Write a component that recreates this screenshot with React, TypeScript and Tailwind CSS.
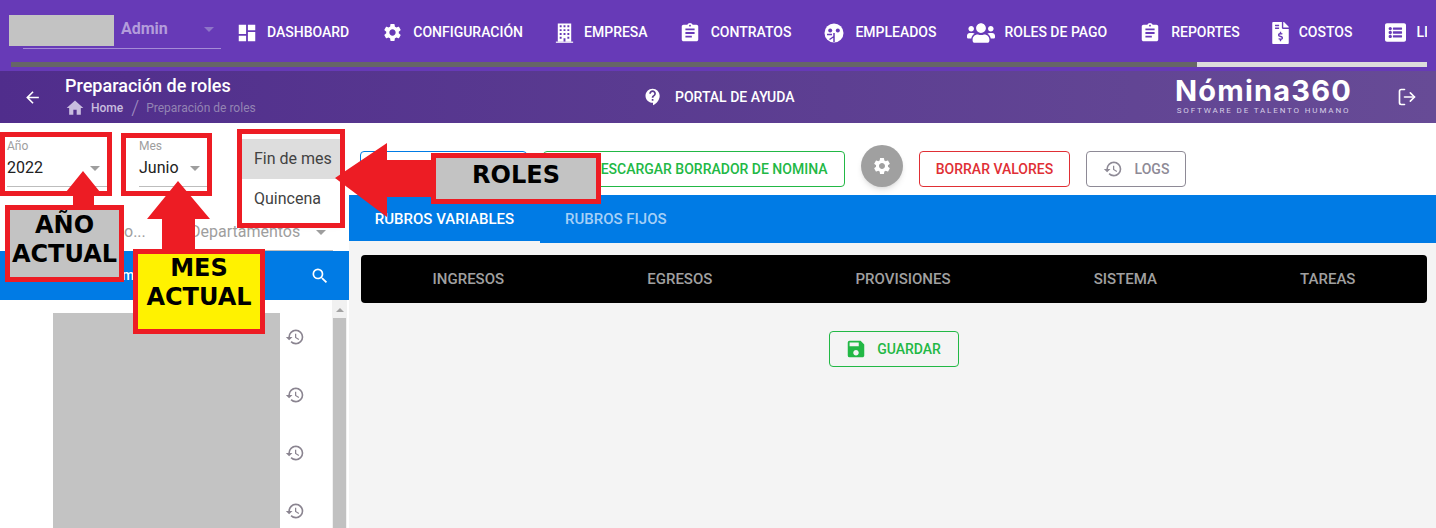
import type { ReactNode } from 'react'
import { LogOut } from 'lucide-react'
import { FaFileInvoiceDollar, FaListAlt, FaUsers } from 'react-icons/fa'
import {
  MdArrowBack,
  MdAssignment,
  MdContactSupport,
  MdDashboard,
  MdHistory,
  MdHome,
  MdSave,
  MdSearch,
  MdSettings,
} from 'react-icons/md'

function BuildingIcon() {
  return (
    <svg viewBox="0 0 24 24" className="w-[24px] h-[24px] fill-white">
      <path d="M5 2V21H11V17.5H13V21H19V2H5M7 4H9V6H7V4M11 4H13V6H11V4M15 4H17V6H15V4M7 8H9V10H7V8M11 8H13V10H11V8M15 8H17V10H15V8M7 12H9V14H7V12M11 12H13V14H11V12M15 12H17V14H15V12M7 16H9V18H7V16M15 16H17V18H15V16Z" />
      <rect x="3" y="21" width="18" height="1.2" />
    </svg>
  )
}

function FaceIcon() {
  return (
    <svg viewBox="0 0 24 24" className="w-[24px] h-[24px]">
      <circle cx="12" cy="12" r="9.5" fill="white" />
      <circle cx="8.2" cy="9.5" r="2" fill="#673ab7" />
      <circle cx="15.8" cy="9.5" r="2" fill="#673ab7" />
      <path d="M12 12v9M12 15.5l-4.5 3M5 13.5h5" stroke="#673ab7" strokeWidth="1.5" fill="none" />
    </svg>
  )
}

const navItems: { label: string; icon: ReactNode; box: string }[] = [
  { label: 'DASHBOARD', icon: <MdDashboard size={22} />, box: 'w-[24px]' },
  { label: 'CONFIGURACIÓN', icon: <MdSettings size={21} />, box: 'w-[26px]' },
  { label: 'EMPRESA', icon: <BuildingIcon />, box: 'w-[23px]' },
  { label: 'CONTRATOS', icon: <MdAssignment size={22} />, box: 'w-[25px]' },
  { label: 'EMPLEADOS', icon: <FaceIcon />, box: 'w-[26px]' },
  { label: 'ROLES DE PAGO', icon: <FaUsers size={28} />, box: 'w-[30px]' },
  { label: 'REPORTES', icon: <MdAssignment size={22} />, box: 'w-[26px]' },
  { label: 'COSTOS', icon: <FaFileInvoiceDollar size={22} />, box: 'w-[21px]' },
  { label: 'LI', icon: <FaListAlt size={21} />, box: 'w-[26px]' },
]

function Caret({ className }: { className: string }) {
  return <span className={`w-0 h-0 border-x-[5px] border-x-transparent border-t-[5px] ${className}`} />
}

function SelectField({ label, value, className }: { label: string; value: string; className: string }) {
  return (
    <div className={`flex flex-col ${className}`}>
      <span className="text-[12px] leading-[14px] text-[#9e9e9e]">{label}</span>
      <div className="flex items-center justify-between h-[30px] pr-[9px] border-b border-[#bdbdbd] pb-[3px] box-content">
        <span className="text-[16px] text-[#212121]">{value}</span>
        <Caret className="border-t-[#9e9e9e]" />
      </div>
    </div>
  )
}

function OutlineButton({ children, className }: { children: ReactNode; className: string }) {
  return (
    <div className={`h-[36px] rounded-[4px] border flex items-center justify-center text-[14px] font-medium ${className}`}>
      {children}
    </div>
  )
}

export default function App() {
  return (
    <div className="relative w-[1436px] h-[528px] overflow-hidden bg-white font-['Roboto',sans-serif]">
      <div className="h-[71px] bg-[#673ab7] pt-[15px] relative">
        <div className="flex items-start h-[47px]">
          <div className="w-[235px] flex-shrink-0 pl-[9px] relative">
            <div className="flex h-[33px] items-start">
              <div className="w-[105px] h-[31px] bg-[#c3c3c3]" />
              <span className="ml-[7px] text-[16px] font-bold text-[#b39ddb] leading-[28px]">Admin</span>
              <Caret className="ml-[36px] mt-[12px] border-t-[#8e75c8]" />
            </div>
            <div className="ml-[14px] w-[198px] h-px bg-[#a58bd6]" />
          </div>
          <div className="flex-1 mr-[9px] overflow-hidden flex gap-[30px] items-center h-[35px] text-white text-[14px] font-medium whitespace-nowrap">
            {navItems.map(item => (
              <div key={item.label} className="flex items-center gap-[8px] flex-shrink-0">
                <span className={`flex justify-center ${item.box}`}>{item.icon}</span>
                {item.label}
              </div>
            ))}
          </div>
        </div>
        <div className="mx-[9px] ml-[11px] h-[5px] bg-[#dcdcdc]">
          <div className="w-[1186px] h-full bg-[#666666]" />
        </div>
      </div>

      <div className="h-[52px] flex items-center bg-gradient-to-r from-[#502d8c] to-[#674b96] text-white">
        <MdArrowBack size={19} className="ml-[23px]" />
        <div className="ml-[23px] w-[575px]">
          <div className="text-[18px] leading-[24px] font-medium mt-[-2px]">Preparación de roles</div>
          <div className="flex items-center text-[12px] leading-[16px]">
            <MdHome size={20} className="text-[#c9bddf]" />
            <span className="ml-[6px] font-medium text-[#c9bddf]">Home</span>
            <span className="ml-[8px] mr-[7px] text-[20px] font-light text-[#a08ec0]">/</span>
            <span className="text-[#9384b3]">Preparación de roles</span>
          </div>
        </div>
        <MdContactSupport size={20} className="ml-[3px]" />
        <span className="ml-[12px] text-[14px] font-medium">PORTAL DE AYUDA</span>
        <div className="ml-[379px] w-[180px] flex flex-col items-center mt-[-3px]">
          <span className="text-[29px] leading-[30px] font-['Inter',sans-serif] font-bold tracking-[1.2px]">Nómina360</span>
          <span className="text-[8px] leading-[9px] tracking-[1.85px] text-[#d6cee6] whitespace-nowrap">SOFTWARE DE TALENTO HUMANO</span>
        </div>
        <LogOut size={20} className="ml-[43px]" />
      </div>

      <div className="flex h-[405px]">
        <div className="w-[349px] flex-shrink-0 flex flex-col">
          <div className="h-[128px] flex flex-col">
            <div className="flex h-[71px] pt-[16px] pl-[7px]">
              <SelectField label="Año" value="2022" className="w-[102px]" />
              <SelectField label="Mes" value="Junio" className="ml-[30px] w-[70px]" />
            </div>
            <div className="flex pl-[124px] pr-[16px] pt-[28px] items-end">
              <div className="w-[50px] flex items-center justify-between text-[16px] leading-[20px] text-[#9e9e9e] pb-[9px]">
                <span>o...</span>
                <Caret className="border-t-[#9e9e9e]" />
              </div>
              <div className="ml-[16px] flex-1 flex items-center justify-between text-[16px] leading-[20px] text-[#9e9e9e] border-b border-[#bdbdbd] pb-[8px]">
                <span>Departamentos</span>
                <Caret className="border-t-[#9e9e9e] mr-[7px]" />
              </div>
            </div>
          </div>
          <div className="h-[49px] bg-[#007be5] text-white flex items-center justify-between pl-[122px] pr-[19px] text-[14px] font-medium">
            <span>m</span>
            <MdSearch size={20} />
          </div>
          <div className="flex-1 flex min-h-0 pr-[2px] overflow-hidden">
            <div className="flex-1 pl-[53px] pt-[13px] flex items-start">
              <div className="w-[227px] h-[215px] bg-[#c3c3c3]" />
              <div className="ml-[5px] flex flex-col gap-[38px] pt-[14px] text-[#8a8490]">
                <MdHistory size={20} />
                <MdHistory size={20} />
                <MdHistory size={20} />
                <MdHistory size={20} />
              </div>
            </div>
            <div className="w-[15px] bg-[#f1f1f1] flex flex-col items-center">
              <span className="mt-[8px] w-0 h-0 border-x-[4px] border-x-transparent border-b-[4px] border-b-[#a3a3a3]" />
              <div className="w-[13px] mt-[6px] flex-1 bg-[#c1c1c1]" />
            </div>
          </div>
        </div>

        <div className="flex-1 flex flex-col bg-[#f4f4f4]">
          <div className="h-[72px] bg-white flex items-start pt-[28px] pl-[11px] gap-[16px] relative">
            <OutlineButton className="w-[167px] border-[#007be5]"> </OutlineButton>
            <OutlineButton className="w-[302px] pl-[31px] border-[#22b845] text-[#22b845]">
              DESCARGAR BORRADOR DE NOMINA
            </OutlineButton>
            <div className="w-[42px] h-[42px] mt-[-6px] rounded-full bg-[#a0a0a0] shadow-md flex items-center justify-center text-white">
              <MdSettings size={20} />
            </div>
            <OutlineButton className="w-[151px] border-[#e02f35] text-[#e02f35]">BORRAR VALORES</OutlineButton>
            <OutlineButton className="w-[100px] border-[#8e8a96] text-[#8e8a96] gap-[12px]">
              <MdHistory size={20} />
              LOGS
            </OutlineButton>
          </div>
          <div className="h-[48px] bg-[#007be5] flex text-[15px] font-medium">
            <div className="w-[191px] h-[48px] pt-[2px] border-b-2 border-[#f4f4f4] flex items-center justify-center text-white">RUBROS VARIABLES</div>
            <div className="h-[48px] flex items-center pl-[25px] text-[#a6d0f7]">RUBROS FIJOS</div>
          </div>
          <div className="h-[48px] mt-[12px] ml-[12px] mr-[9px] bg-black rounded-[4px] flex items-center justify-around text-[15px] font-medium text-[#a0a0a0]">
            <span>INGRESOS</span>
            <span>EGRESOS</span>
            <span>PROVISIONES</span>
            <span>SISTEMA</span>
            <span>TAREAS</span>
          </div>
          <div className="flex justify-center mt-[28px] pl-[3px]">
            <OutlineButton className="w-[130px] pr-[2px] border-[#22b845] text-[#22b845] gap-[10px] text-[13px]">
              <MdSave size={22} />
              GUARDAR
            </OutlineButton>
          </div>
        </div>
      </div>

      {/* dropdown abierto */}
      <div className="absolute left-[242px] top-[139px] w-[100px] h-[84px] bg-white shadow-md text-[16px] text-[#424242]">
        <div className="h-[40px] bg-[#dddddd] flex items-center pl-[12px]">Fin de mes</div>
        <div className="h-[40px] flex items-center pl-[12px]">Quincena</div>
      </div>

      {/* anotaciones del tutorial */}
      <svg className="absolute left-0 top-0 pointer-events-none" width="1436" height="528">
        <polygon fill="#ed1c24" points="83,171 100,192 94,192 94,208 73,208 73,192 66,192" />
        <polygon fill="#ed1c24" points="178,181 210,219 195,219 195,255 162,255 162,219 147,219" />
        <polygon fill="#ed1c24" points="335,178 387,143 387,160 432,160 432,197 387,197 387,217" />
      </svg>
      <div className="absolute left-0 top-[132px] w-[112px] h-[64px] border-[5px] border-[#ed1c24]" />
      <div className="absolute left-[121px] top-[133px] w-[91px] h-[63px] border-[5px] border-[#ed1c24]" />
      <div className="absolute left-[237px] top-[129px] w-[108px] h-[99px] border-[5px] border-[#ed1c24]" />
      <div className="absolute left-[5px] top-[205px] w-[119px] h-[77px] border-[5px] border-[#ed1c24] bg-[#c3c3c3] pt-[1px] text-center text-[24px] leading-[29px] font-bold text-black font-['DejaVu_Sans',sans-serif]">
        AÑO<br />ACTUAL
      </div>
      <div className="absolute left-[133px] top-[249px] w-[132px] h-[85px] border-[5px] border-[#ed1c24] bg-[#fff200] text-center text-[24px] leading-[29px] font-bold text-black font-['DejaVu_Sans',sans-serif]">
        MES<br />ACTUAL
      </div>
      <div className="absolute left-[431px] top-[153px] w-[170px] h-[51px] border-[5px] border-[#ed1c24] bg-[#c3c3c3] pb-[7px] flex items-center justify-center text-[24px] font-bold text-black font-['DejaVu_Sans',sans-serif]">
        ROLES
      </div>
    </div>
  )
}
